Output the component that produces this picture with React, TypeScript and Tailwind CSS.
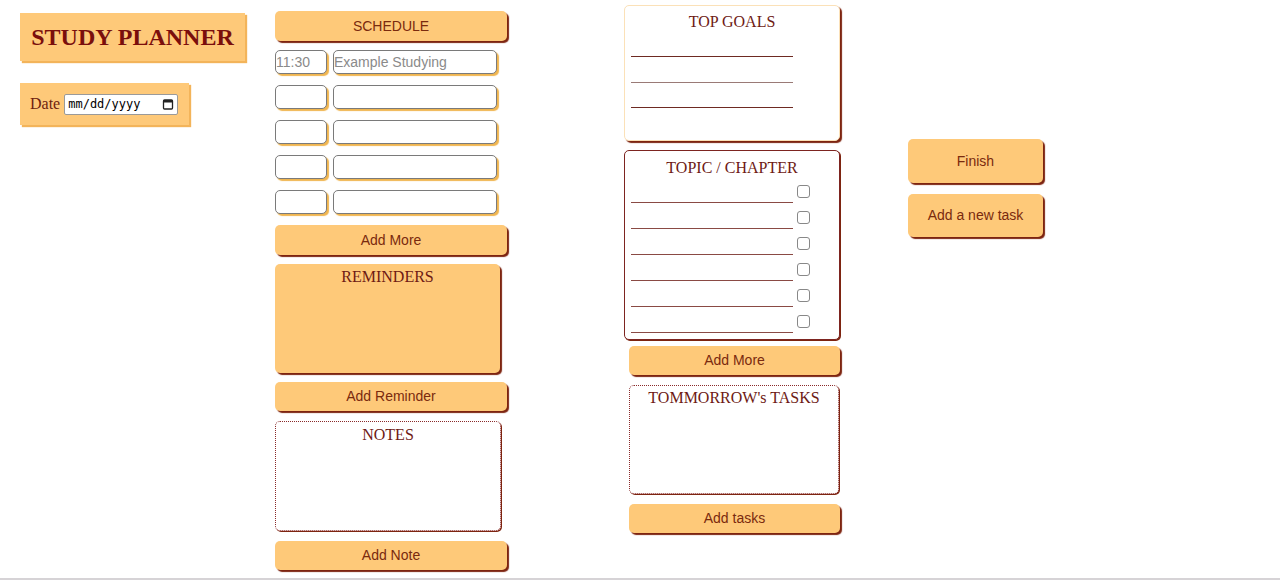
const btn =
  "flex items-center justify-center rounded-[5px] bg-[#fec979] text-[14px] text-[#7a2a0e] shadow-[2px_2px_1px_#7d2410] font-['Liberation_Sans',Arial,sans-serif]";

function Btn({ label, className }: { label: string; className: string }) {
  return <div className={`${btn} ${className}`}>{label}</div>;
}

function ScheduleRow({ time, task }: { time?: string; task?: string }) {
  return (
    <div className="flex gap-[6px]">
      <div className="h-[24px] w-[52px] rounded-[5px] border border-[#7a7a7a] bg-white shadow-[2px_2px_1px_#f0b54f] text-[14px] leading-[22px] text-[#8a8a8a] font-['Liberation_Sans',Arial,sans-serif]">
        {time}
      </div>
      <div className="h-[24px] w-[164px] rounded-[5px] border border-[#7a7a7a] bg-white shadow-[2px_2px_1px_#f0b54f] text-[14px] leading-[22px] text-[#8a8a8a] font-['Liberation_Sans',Arial,sans-serif]">
        {task}
      </div>
    </div>
  );
}

const serifTitle = "text-center font-['Liberation_Serif','Times_New_Roman',serif] text-[16px] text-[#6e1a14]";

export default function App() {
  return (
    <div className="min-h-[580px] border-b-[2px] border-[#d6d3d6] bg-white">
      <div className="flex">
        {/* left column */}
        <div className="ml-[20px] flex w-[225px] flex-col pt-[13px]">
          <div className="flex h-[48px] w-[225px] items-center justify-center bg-[#fec979] shadow-[2px_2px_1px_#f3b45a]">
            <span className="font-['Liberation_Serif','Times_New_Roman',serif] text-[24px] font-bold text-[#7a0e0c]">
              STUDY PLANNER
            </span>
          </div>
          <div className="mt-[22px] flex h-[42px] w-[169px] items-center gap-[4px] bg-[#fec979] pl-[10px] shadow-[2px_2px_1px_#f3b45a]">
            <span className="font-['Liberation_Serif','Times_New_Roman',serif] text-[16px] text-[#6e1f10]">Date</span>
            <div className="flex h-[21px] w-[114px] items-center justify-between rounded-[2px] border border-[#9a9a9a] bg-white px-[3px]">
              <span className="font-['DejaVu_Sans_Mono',monospace] text-[12px] text-black">mm/dd/yyyy</span>
              <svg width="12" height="12" viewBox="0 0 12 12">
                <rect x="1.5" y="2" width="9" height="9" rx="1" fill="none" stroke="#222" strokeWidth="1.3" />
                <rect x="1.5" y="2" width="9" height="2.5" fill="#222" />
              </svg>
            </div>
          </div>
        </div>

        {/* schedule column */}
        <div className="ml-[30px] flex w-[232px] flex-col pt-[11px]">
          <Btn label="SCHEDULE" className="h-[30px] w-[232px]" />
          <div className="mt-[9px] flex flex-col gap-[11px]">
            <ScheduleRow time="11:30" task="Example Studying" />
            <ScheduleRow />
            <ScheduleRow />
            <ScheduleRow />
            <ScheduleRow />
          </div>
          <Btn label="Add More" className="mt-[11px] h-[30px] w-[232px]" />
          <div className="mt-[9px] h-[109px] w-[225px] rounded-[5px] bg-[#fec979] pt-[1px] shadow-[2px_2px_1px_#7d2410]">
            <div className={serifTitle}>REMINDERS</div>
          </div>
          <Btn label="Add Reminder" className="mt-[9px] h-[29px] w-[232px]" />
          <div className="mt-[10px] h-[110px] w-[226px] rounded-[5px] border border-dotted border-[#8a2a2a] bg-white pt-[1px] shadow-[1px_1px_0_#7d2410]">
            <div className={serifTitle}>NOTES</div>
          </div>
          <Btn label="Add Note" className="mt-[10px] h-[29px] w-[232px]" />
        </div>

        {/* goals column */}
        <div className="ml-[117px] flex w-[217px] flex-col pt-[5px]">
          <div className="h-[136px] w-[216px] rounded-[5px] border border-[#fbe1b8] bg-white pt-[4px] shadow-[2px_2px_1px_#7d2410]">
            <div className={serifTitle}>TOP GOALS</div>
            <div className="ml-[6px] mt-[22px] flex flex-col gap-[24.5px]">
              <div className="h-px w-[162px] bg-[#6e2a22]" />
              <div className="h-px w-[162px] bg-[#9a7a76]" />
              <div className="h-px w-[162px] bg-[#6e2a22]" />
            </div>
          </div>
          <div className="mt-[9px] h-[190px] w-[216px] rounded-[5px] border border-[#7d2420] bg-white pt-[5px] shadow-[1px_1px_0_#7d2410]">
            <div className={serifTitle}>TOPIC / CHAPTER</div>
            <div className="ml-[6px] mt-[-3px] flex flex-col">
              {[0, 1, 2, 3, 4, 5].map((i) => (
                <div key={i} className="flex h-[26px] items-end gap-[4px]">
                  <div className="h-px w-[162px] bg-[#8a4a44]" />
                  <div className="mb-[5px] h-[13px] w-[13px] rounded-[3px] border border-[#888] bg-white" />
                </div>
              ))}
            </div>
          </div>
          <Btn label="Add More" className="ml-[5px] mt-[6px] h-[29px] w-[211px]" />
          <div className="ml-[5px] mt-[10px] h-[109px] w-[210px] rounded-[5px] border border-dotted border-[#8a2a2a] bg-white pt-0 shadow-[1px_1px_0_#7d2410]">
            <div className={serifTitle}>TOMMORROW's TASKS</div>
          </div>
          <Btn label="Add tasks" className="ml-[5px] mt-[10px] h-[29px] w-[211px]" />
        </div>

        {/* actions column */}
        <div className="ml-[67px] flex w-[136px] flex-col pt-[139px]">
          <Btn label="Finish" className="h-[44px] w-[135px]" />
          <Btn label="Add a new task" className="mt-[11px] h-[43px] w-[135px]" />
        </div>
      </div>
    </div>
  );
}
